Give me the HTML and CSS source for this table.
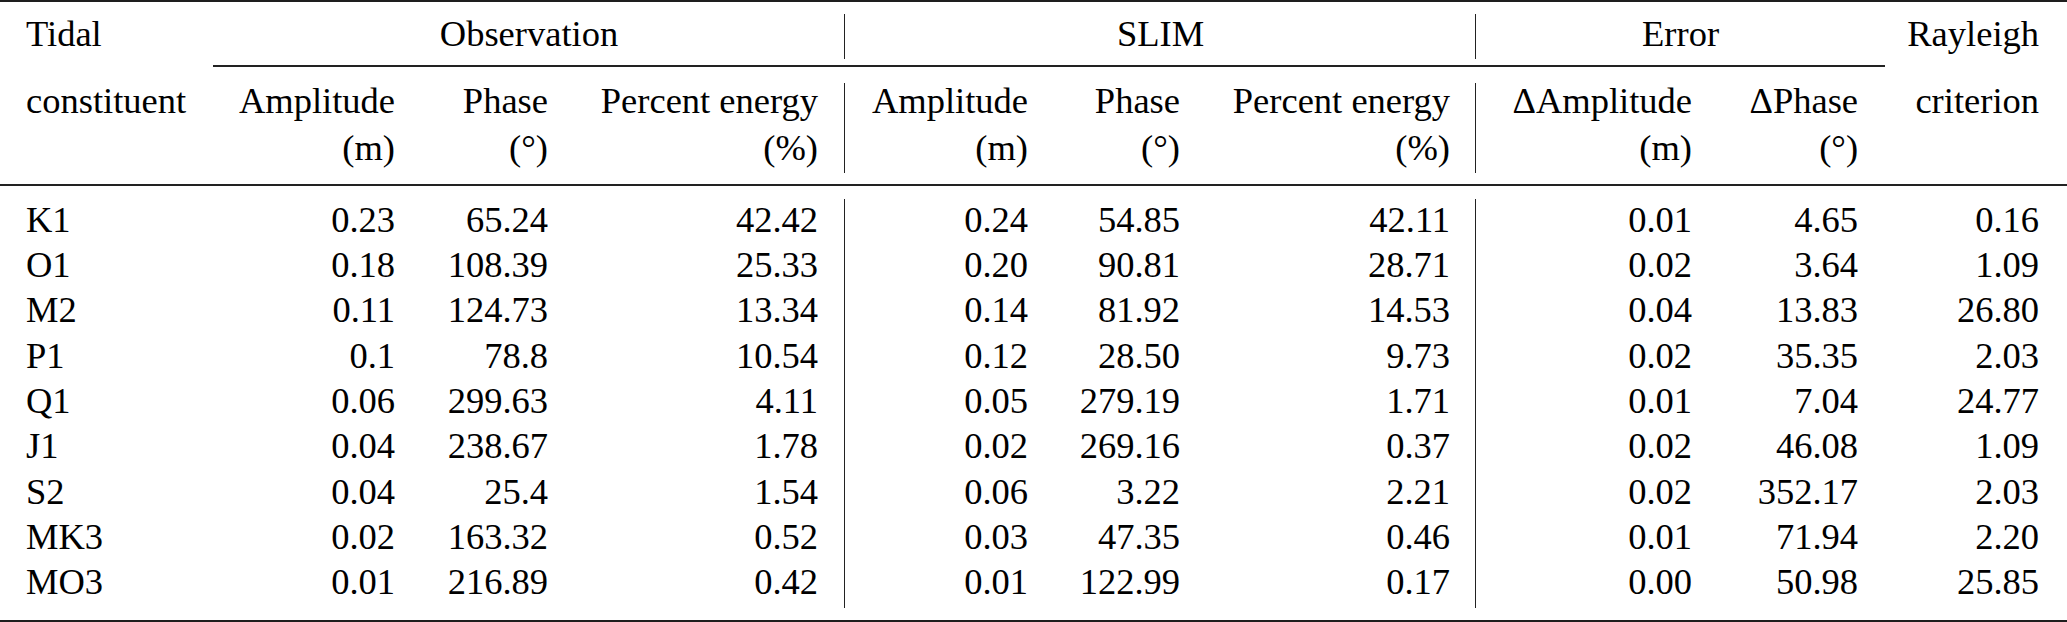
FILE: index.html
```html
<!DOCTYPE html>
<html lang="en">
<head>
<meta charset="utf-8">
<title>Tidal constituents</title>
<link rel="stylesheet" href="styles.css">
</head>
<body>
<table class="tide">
  <colgroup>
    <col class="w1"><col class="w2"><col class="w3"><col class="w4"><col class="w5">
    <col class="w6"><col class="w7"><col class="w8"><col class="w9"><col class="w10">
  </colgroup>
  <thead>
    <tr class="h1">
      <th class="first">Tidal</th>
      <th colspan="3" class="grp vl">Observation</th>
      <th colspan="3" class="grp vl">SLIM</th>
      <th colspan="2" class="grp">Error</th>
      <th class="last">Rayleigh</th>
    </tr>
    <tr class="h2">
      <th class="first">constituent</th>
      <th>Amplitude<br>(m)</th>
      <th>Phase<br>(°)</th>
      <th class="vl">Percent energy<br>(%)</th>
      <th>Amplitude<br>(m)</th>
      <th>Phase<br>(°)</th>
      <th class="vl c7">Percent energy<br>(%)</th>
      <th>ΔAmplitude<br>(m)</th>
      <th>ΔPhase<br>(°)</th>
      <th class="last">criterion</th>
    </tr>
  </thead>
  <tbody>
    <tr><td class="first">K1</td><td>0.23</td><td>65.24</td><td class="vl">42.42</td><td>0.24</td><td>54.85</td><td class="vl c7">42.11</td><td>0.01</td><td>4.65</td><td class="last">0.16</td></tr>
    <tr><td class="first">O1</td><td>0.18</td><td>108.39</td><td class="vl">25.33</td><td>0.20</td><td>90.81</td><td class="vl c7">28.71</td><td>0.02</td><td>3.64</td><td class="last">1.09</td></tr>
    <tr><td class="first">M2</td><td>0.11</td><td>124.73</td><td class="vl">13.34</td><td>0.14</td><td>81.92</td><td class="vl c7">14.53</td><td>0.04</td><td>13.83</td><td class="last">26.80</td></tr>
    <tr><td class="first">P1</td><td>0.1</td><td>78.8</td><td class="vl">10.54</td><td>0.12</td><td>28.50</td><td class="vl c7">9.73</td><td>0.02</td><td>35.35</td><td class="last">2.03</td></tr>
    <tr><td class="first">Q1</td><td>0.06</td><td>299.63</td><td class="vl">4.11</td><td>0.05</td><td>279.19</td><td class="vl c7">1.71</td><td>0.01</td><td>7.04</td><td class="last">24.77</td></tr>
    <tr><td class="first">J1</td><td>0.04</td><td>238.67</td><td class="vl">1.78</td><td>0.02</td><td>269.16</td><td class="vl c7">0.37</td><td>0.02</td><td>46.08</td><td class="last">1.09</td></tr>
    <tr><td class="first">S2</td><td>0.04</td><td>25.4</td><td class="vl">1.54</td><td>0.06</td><td>3.22</td><td class="vl c7">2.21</td><td>0.02</td><td>352.17</td><td class="last">2.03</td></tr>
    <tr><td class="first">MK3</td><td>0.02</td><td>163.32</td><td class="vl">0.52</td><td>0.03</td><td>47.35</td><td class="vl c7">0.46</td><td>0.01</td><td>71.94</td><td class="last">2.20</td></tr>
    <tr><td class="first">MO3</td><td>0.01</td><td>216.89</td><td class="vl">0.42</td><td>0.01</td><td>122.99</td><td class="vl c7">0.17</td><td>0.00</td><td>50.98</td><td class="last">25.85</td></tr>
  </tbody>
</table>
</body>
</html>
```
FILE: styles.css
```css
html, body {
  margin: 0;
  padding: 0;
  background: #fff;
}

.tide {
  width: 2067px;
  table-layout: fixed;
  border-collapse: separate;
  border-spacing: 0;
  font-family: "Liberation Serif", "Times New Roman", serif;
  font-size: 36.5px;
  color: #000;
  border-top: 2px solid #1e1e1e;
  border-bottom: 2px solid #1e1e1e;
}

.w1 { width: 213px; }
.w2 { width: 209px; }
.w3 { width: 153px; }
.w4 { width: 270px; }
.w5 { width: 210px; }
.w6 { width: 152px; }
.w7 { width: 269px; }
.w8 { width: 243px; }
.w9 { width: 166px; }
.w10 { width: 182px; }

.tide th,
.tide td {
  font-family: "Liberation Serif", "Times New Roman", serif;
  font-weight: normal;
  padding: 0 27px 0 0;
  text-align: right;
  vertical-align: top;
  white-space: nowrap;
}

.tide .first {
  text-align: left;
  padding-left: 26px;
  padding-right: 0;
}

.tide .last {
  padding-right: 28px;
}

.tide .c7 {
  padding-right: 26px;
}

/* header row 1 */
.h1 th {
  line-height: 47px;
  padding-top: 8px;
  padding-bottom: 8px;
  border-bottom: 2px solid transparent;
}

.tide .h1 .grp {
  text-align: center;
  padding-right: 0;
  border-bottom-color: #222;
}

/* header row 2 */
.h2 th {
  line-height: 47px;
  padding-top: 10px;
  padding-bottom: 13px;
  border-bottom: 2px solid #222;
}

/* body rows */
.tide td {
  line-height: 45.33px;
}

.tide tbody tr:first-child td {
  padding-top: 10.7px;
}

.tide tbody tr:last-child td {
  padding-bottom: 15px;
}

/* vertical rules with gaps at horizontal rules */
.vl {
  background-image: linear-gradient(#222, #222);
  background-repeat: no-repeat;
  background-position: right 0 top 0;
  background-size: 1.5px 100%;
}

.h1 .vl {
  background-position: right 0 top 12px;
  background-size: 1.5px 45px;
}

.h2 .vl {
  background-position: right 0 top 16px;
  background-size: 1.5px 90px;
}

.tide tbody tr:first-child .vl {
  background-position: right 0 top 13px;
}

.tide tbody tr:last-child .vl {
  background-size: 1.5px calc(100% - 12px);
}
```
